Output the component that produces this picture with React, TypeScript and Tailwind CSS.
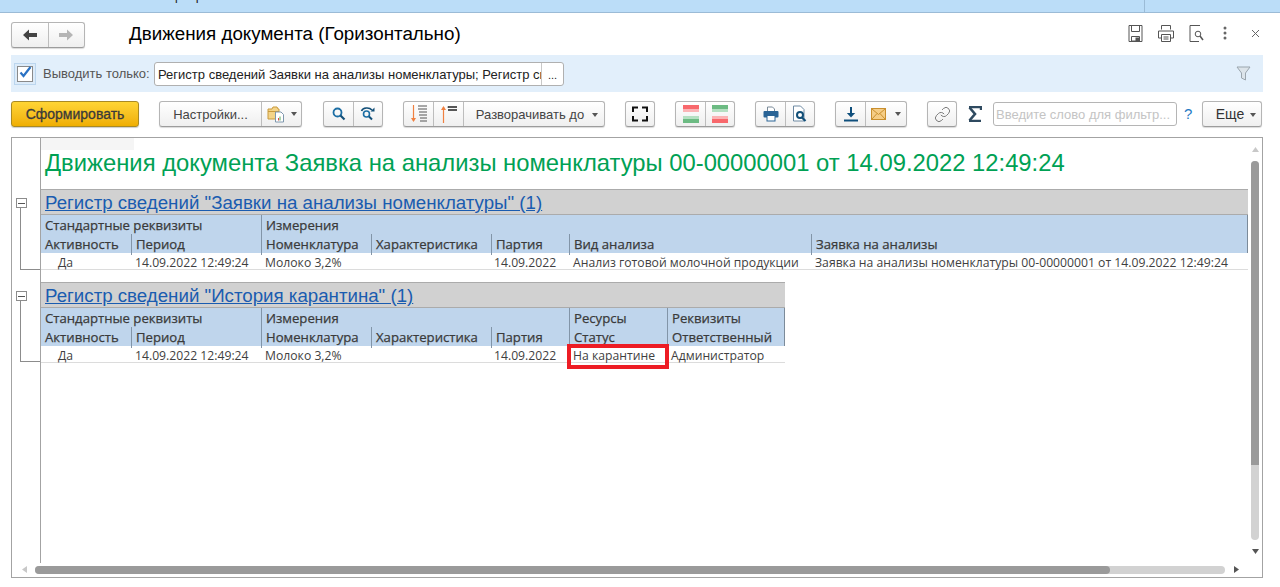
import React from "react";
import { Link as LinkIcon } from "lucide-react";

const ui = "font-['Liberation_Sans',sans-serif]";
const tbl = "font-['Open_Sans',sans-serif]";

function Caret({ className = "" }: { className?: string }) {
  return <span className={"inline-block w-0 h-0 border-l-[3.5px] border-r-[3.5px] border-t-[4px] border-l-transparent border-r-transparent border-t-[#555] " + className} />;
}

function Group({ className = "", children }: { className?: string; children: React.ReactNode }) {
  return (
    <div className={"flex h-[26px] shrink-0 rounded-[3px] border border-[#b5b5b5] border-b-[#9c9c9c] bg-gradient-to-b from-white to-[#efefef] shadow-[0_1px_1px_rgba(0,0,0,0.15)] divide-x divide-[#bdbdbd] " + className}>
      {children}
    </div>
  );
}

function Seg({ className = "", children }: { className?: string; children: React.ReactNode }) {
  return <div className={"flex items-center justify-center h-full " + className}>{children}</div>;
}

const Search = () => (
  <svg width="16" height="16" viewBox="0 0 16 16" fill="none"><circle cx="6.5" cy="6.5" r="4" stroke="#1c6ea4" strokeWidth="1.8" /><path d="M9.5 9.5l4 4" stroke="#124f78" strokeWidth="2.2" /></svg>
);
const SearchRepeat = () => (
  <svg width="18" height="16" viewBox="0 0 18 16" fill="none"><circle cx="7.5" cy="8" r="3" stroke="#1c6ea4" strokeWidth="1.6" /><path d="M10 10.5l3 3" stroke="#124f78" strokeWidth="2" /><path d="M2.5 5C4 1.5 10 0.8 13 4" stroke="#124f78" strokeWidth="1.6" /><path d="M11.5 5.5h4v-4z" fill="#124f78" /></svg>
);
const SortDown = () => (
  <svg width="18" height="20" viewBox="0 0 18 20" fill="none">
    <path d="M3.5 1v16" stroke="#f08040" strokeWidth="1.2" /><path d="M1 14l2.5 4 2.5-4z" fill="#f08040" />
    <path d="M8 2h9M8 5h9M9 8h8M9 11h8M10 14h7M10 17h7" stroke="#555" strokeWidth="1" />
  </svg>
);
const SortUp = () => (
  <svg width="18" height="20" viewBox="0 0 18 20" fill="none">
    <path d="M3.5 3v16" stroke="#f08040" strokeWidth="1.2" /><path d="M1 6l2.5-4 2.5 4z" fill="#f08040" />
    <path d="M8 3h9M8 6h9" stroke="#222" strokeWidth="1.4" /><circle cx="8" cy="3" r="0.6" fill="#222" />
  </svg>
);
const Full = () => (
  <svg width="16" height="16" viewBox="0 0 16 16" fill="none" stroke="#111" strokeWidth="2"><path d="M1 6V1.500h5M10 1.500h5V6M1 10v4.500h5M10 14.500h5V10" /></svg>
);
const Bars = ({ flip }: { flip?: boolean }) => (
  <svg width="16" height="18" viewBox="0 0 16 18">
    {flip ? (
      <>
        <rect width="16" height="4" fill="#6cbb83" /><rect y="4" width="16" height="3" fill="#b5e0c2" />
        <rect y="11" width="16" height="3" fill="#fbb4b6" /><rect y="14" width="16" height="4" fill="#f8686c" />
      </>
    ) : (
      <>
        <rect width="16" height="4" fill="#f8686c" /><rect y="4" width="16" height="3" fill="#fbb4b6" />
        <rect y="11" width="16" height="3" fill="#b5e0c2" /><rect y="14" width="16" height="4" fill="#6cbb83" />
      </>
    )}
  </svg>
);
const Printer = () => (
  <svg width="16" height="16" viewBox="0 0 16 16" fill="none"><path d="M4.500 5V1h5l2 2v2" stroke="#7a8a99" fill="#fff" /><rect x="0.500" y="5" width="15" height="6.500" rx="1" fill="#2a6496" /><rect x="4" y="9.500" width="8" height="5.500" fill="#fff" stroke="#2a6496" /></svg>
);
const Preview = () => (
  <svg width="16" height="18" viewBox="0 0 16 18" fill="none"><path d="M1.500 1h7l3.500 3.500V16h-10.500z" stroke="#6e8aa3" fill="#fff" /><circle cx="8" cy="10" r="3" stroke="#124f78" strokeWidth="2" /><path d="M10 12.500l3.500 3.500" stroke="#124f78" strokeWidth="2.2" /></svg>
);
const Download = () => (
  <svg width="16" height="16" viewBox="0 0 16 16" fill="none"><path d="M8 1v8" stroke="#0f4f7c" strokeWidth="2" /><path d="M3.800 7h8.400L8 11.500z" fill="#0f4f7c" /><path d="M1 14.500h14" stroke="#0f4f7c" strokeWidth="2" /></svg>
);
const Mail = () => (
  <svg width="15" height="12" viewBox="0 0 15 12" fill="none"><rect x="0.500" y="0.500" width="14" height="11" fill="#f5cd86" stroke="#c98f2e" /><path d="M1 1l6.500 5.500L14 1M1 11l5-5.500M14 11L9 5.500" stroke="#c98f2e" /></svg>
);
const Folder = () => (
  <svg width="18" height="18" viewBox="0 0 18 18" fill="none"><path d="M1 4h4l1-2h4l1 2h1v10H1z" fill="#f4d488" stroke="#c99a3c" /><path d="M1 6.500h11" stroke="#c99a3c" /><path d="M8.500 7h5.500l2.500 2.500V17h-8z" fill="#fff" stroke="#7e97ad" /><rect x="11" y="13" width="1" height="2.500" fill="#d44" /><rect x="12.500" y="11.500" width="1" height="4" fill="#5a5" /></svg>
);
const Funnel = () => (
  <svg width="15" height="15" viewBox="0 0 15 15" fill="none"><path d="M1 1h13L9.500 7v7l-4-2V7z" stroke="#9aa5ad" fill="#dce4ea" /></svg>
);
const Floppy = () => (
  <svg width="15" height="17" viewBox="0 0 15 17" fill="none" stroke="#555"><path d="M1 0.500h13v16H1z" /><path d="M3.500 1v5.500h8V1M3.500 11.500h8V16h-8z" /><rect x="8" y="13" width="3" height="3" fill="#555" /></svg>
);
const PrintOut = () => (
  <svg width="16" height="17" viewBox="0 0 16 17" fill="none" stroke="#555"><path d="M3.500 4.500V0.500h9v4M0.500 6h15v7h-3M3.500 13h-3V6" /><path d="M3.500 9.500h9v7h-9zM5.500 12h5M5.500 14h5" /></svg>
);
const PageSearch = () => (
  <svg width="15" height="17" viewBox="0 0 15 17" fill="none" stroke="#555"><path d="M10 16.500H1V0.500h10" /><circle cx="9" cy="9" r="2.800" /><path d="M11 11l3 4" strokeWidth="1.500" /></svg>
);

const headDiv = "border-l border-[#8295a8]";

function Head({ cols, groups, labels, width }: { cols: string; groups: { t: string; span: string }[]; labels: string[]; width: string }) {
  return (
    <div className={"bg-[#bfd5ec] border-r border-[#7c8b9a] text-[13.15px] text-[#3a3a3a] [-webkit-text-stroke:0.25px_#3a3a3a] " + width}>
      <div className={"grid h-[19px] " + cols}>
        {groups.map((g, i) => (
          <div key={g.t} className={"pl-[4px] leading-[20px] whitespace-nowrap " + g.span + (i ? " " + headDiv : "")}>{g.t}</div>
        ))}
      </div>
      <div className={"grid h-[19px] " + cols}>
        {labels.map((l, i) => (
          <div key={i} className={"pl-[4px] leading-[21px] whitespace-nowrap " + (i ? headDiv : "")}>{l}</div>
        ))}
      </div>
    </div>
  );
}

function Row({ cols, cells, width }: { cols: string; cells: React.ReactNode[]; width: string }) {
  return (
    <div className={"grid h-[17px] border-b border-[#dcdcdc] text-[12.2px] leading-[20px] text-[#3f3f3f] " + cols + " " + width}>
      {cells.map((c, i) => (
        <div key={i} className={"whitespace-nowrap " + (i === 0 ? "pl-[17px]" : i === 4 ? "pl-[3px]" : "pl-[4px]")}>{c}</div>
      ))}
    </div>
  );
}

function Section({ title, width, children }: { title: string; width: string; children: React.ReactNode }) {
  return (
    <div className={width}>
      <div className={"h-[26px] bg-[#d1d1d1] border-t border-b border-[#ababab] pl-[4px] text-[18.7px] leading-[26px] text-[#1a5cb0] underline whitespace-nowrap " + ui}>{title}</div>
      {children}
    </div>
  );
}

function Tree({ height }: { height: string }) {
  return (
    <div className={"ml-[3px] " + height}>
      <div className="w-[11px] h-[10px] border border-[#8c8c8c] bg-white flex items-center justify-center">
        <div className="w-[7px] h-px bg-[#555]" />
      </div>
      <div className="ml-[4px] w-[20px] border-l border-b border-[#8c8c8c] h-[calc(100%-10px)]" />
    </div>
  );
}

export default function App() {
  const c1 = "grid-cols-[90px_130px_110px_120px_78px_242px_436px]";
  const c2 = "grid-cols-[90px_130px_110px_120px_78px_98px_117px]";
  return (
    <div className={"w-[1280px] h-[587px] bg-white overflow-hidden text-[#333] " + ui}>
      {/* top strip */}
      <div className="h-[13px] bg-[#bbddf8] border-b border-[#9bbbd6] flex overflow-hidden">
        <div className="w-[1145px] border-r border-[#9bbbd6] overflow-hidden">
          <div className="ml-[171px] -mt-[11px] text-[13px] leading-[14px] tracking-[14px] text-[#222]">фр</div>
        </div>
      </div>

      {/* title row */}
      <div className="h-[42px] flex items-start pl-[11px] pr-[20px] pt-[9px]">
        <Group className="w-[74px] h-[24px]">
          <Seg className="w-[37px]">
            <svg width="14" height="12" viewBox="0 0 14 12"><path d="M6 0.500v3.500h8v4H6v3.500L0 6z" fill="#444" /></svg>
          </Seg>
          <Seg className="w-[36px]">
            <svg width="14" height="12" viewBox="0 0 14 12"><path d="M8 0.500v3.500H0v4h8v3.500L14 6z" fill="#b5b5b5" /></svg>
          </Seg>
        </Group>
        <div className="ml-[44px] -mt-[1px] text-[18.8px] leading-[26px] text-black whitespace-nowrap">Движения документа (Горизонтально)</div>
        <div className="ml-auto flex items-center h-[24px] gap-[15px] -mt-[1px]">
          <Floppy /><PrintOut /><PageSearch />
          <svg width="4" height="14" viewBox="0 0 4 14" className="ml-[4px]"><circle cx="2" cy="2" r="1.500" fill="#666" /><circle cx="2" cy="7" r="1.500" fill="#666" /><circle cx="2" cy="12" r="1.500" fill="#666" /></svg>
          <svg width="9" height="9" viewBox="0 0 9 9" className="ml-[9px]"><path d="M1 1l7 7M8 1L1 8" stroke="#666" strokeWidth="1" /></svg>
        </div>
      </div>

      {/* filter band */}
      <div className="mx-[11px] w-[1252px] h-[37px] bg-[#e2effb] flex items-center pl-[3px] pr-[12px]">
        <div className="w-[22px] h-[22px] border border-[#bcd6ee] bg-[#dcebf9] flex items-center justify-center">
          <div className="w-[16px] h-[16px] border border-[#8a8a8a] bg-white flex items-center justify-center">
            <svg width="15" height="15" viewBox="0 0 14 14" className="-mt-[2px]"><path d="M2.500 7l3 3.500L12.500 1.500" stroke="#2a72c4" strokeWidth="2.200" fill="none" /></svg>
          </div>
        </div>
        <div className="ml-[7px] w-[111px] text-[13px] text-[#555] whitespace-nowrap">Выводить только:</div>
        <div className="w-[410px] h-[24px] border border-[#b0b0b0] rounded-[3px] bg-white flex text-[13px] leading-[23px] text-[#222]">
          <div className="w-[387px] pl-[3px] overflow-hidden whitespace-nowrap border-r border-[#c8c8c8]">Регистр сведений Заявки на анализы номенклатуры; Регистр сведений История карантина</div>
          <div className="flex-1 text-center text-[11px] leading-[24px]">...</div>
        </div>
        <div className="ml-auto"><Funnel /></div>
      </div>

      {/* toolbar */}
      <div className="h-[45px] pl-[11px] pt-[9px] flex items-start text-[13px] text-[#444]">
        <div className="w-[128px] h-[26px] pt-px rounded-[3px] border border-[#a98a24] bg-gradient-to-b from-[#ffd534] to-[#efae00] flex items-center justify-center text-[14px] text-[#3a3a3a] [-webkit-text-stroke:0.3px_#3a3a3a] shadow-[0_1px_1px_rgba(0,0,0,0.2)]">Сформировать</div>
        <Group className="ml-[20px] w-[143px]">
          <Seg className="w-[102px] pt-px">Настройки...</Seg>
          <Seg className="flex-1 gap-[6px]"><Folder /><Caret /></Seg>
        </Group>
        <Group className="ml-[21px] w-[60px]">
          <Seg className="w-[30px]"><Search /></Seg>
          <Seg className="flex-1"><SearchRepeat /></Seg>
        </Group>
        <Group className="ml-[20px] w-[202px]">
          <Seg className="w-[30px]"><SortDown /></Seg>
          <Seg className="w-[30px]"><SortUp /></Seg>
          <Seg className="flex-1 gap-[8px] pt-px pl-[6px] whitespace-nowrap">Разворачивать до <Caret /></Seg>
        </Group>
        <Group className="ml-[20px] w-[30px]">
          <Seg className="w-full"><Full /></Seg>
        </Group>
        <Group className="ml-[20px] w-[60px]">
          <Seg className="w-[30px]"><Bars /></Seg>
          <Seg className="flex-1"><Bars flip /></Seg>
        </Group>
        <Group className="ml-[20px] w-[60px]">
          <Seg className="w-[30px]"><Printer /></Seg>
          <Seg className="flex-1"><Preview /></Seg>
        </Group>
        <Group className="ml-[20px] w-[72px]">
          <Seg className="w-[30px]"><Download /></Seg>
          <Seg className="flex-1 gap-[9px]"><Mail /><Caret /></Seg>
        </Group>
        <Group className="ml-[20px] w-[30px]">
          <Seg className="w-full"><LinkIcon size={17} strokeWidth={1.2} color="#666" /></Seg>
        </Group>
        <div className="ml-[11px] w-[14px] h-[26px] flex items-center justify-center">
          <svg width="14" height="16" viewBox="0 0 14 16"><path d="M1 1h12v3M13 15H1" stroke="#2f4a60" strokeWidth="2.400" fill="none" /><path d="M1.500 1.500L7 8l-5.500 6.500" stroke="#2f4a60" strokeWidth="2.600" fill="none" /></svg>
        </div>
        <div className="ml-[11px] w-[184px] h-[24px] mt-[1px] border border-[#b5b5b5] rounded-[3px] bg-white pl-[2px] text-[13px] leading-[23px] text-[#c4c4c4] whitespace-nowrap overflow-hidden">Введите слово для фильтр...</div>
        <div className="ml-[7px] w-[18px] h-[26px] text-[15px] leading-[26px] text-[#1f7ac4]">?</div>
        <Group className="w-[60px]">
          <Seg className="w-full gap-[6px] pt-px pl-[8px] text-[#333] text-[14px]">Еще <Caret /></Seg>
        </Group>
      </div>

      {/* report frame */}
      <div className="ml-[11px] w-[1252px] h-[441px] border border-[#a3a3a3] flex flex-col">
        <div className="flex h-[425px]">
          {/* gutter */}
          <div className="w-[29px] shrink-0 border-r border-[#a3a3a3] pl-px">
            <div className="pt-[60px]"><Tree height="h-[72px]" /></div>
            <div className="pt-[21px]"><Tree height="h-[71px]" /></div>
          </div>
          {/* report */}
          <div className={"w-[1207px] shrink-0 " + tbl}>
            <div className="h-[12px] w-[93px] bg-[#f5f5f5]" />
            <div className={"h-[39px] pl-[4px] text-[23.8px] leading-[26px] text-[#00a154] whitespace-nowrap " + ui}>Движения документа Заявка на анализы номенклатуры 00-00000001 от 14.09.2022 12:49:24</div>
            <Section title={'Регистр сведений "Заявки на анализы номенклатуры" (1)'} width="w-[1207px]">
              <Head
                cols={c1}
                width="w-[1207px]"
                groups={[
                  { t: "Стандартные реквизиты", span: "col-span-2" },
                  { t: "Измерения", span: "col-span-5" },
                ]}
                labels={["Активность", "Период", "Номенклатура", "Характеристика", "Партия", "Вид анализа", "Заявка на анализы"]}
              />
              <Row
                cols={c1}
                width="w-[1207px]"
                cells={["Да", "14.09.2022 12:49:24", "Молоко 3,2%", "", "14.09.2022", "Анализ готовой молочной продукции", "Заявка на анализы номенклатуры 00-00000001 от 14.09.2022 12:49:24"]}
              />
            </Section>
            <div className="h-[12px]" />
            <Section title={'Регистр сведений "История карантина" (1)'} width="w-[744px]">
              <Head
                cols={c2}
                width="w-[744px]"
                groups={[
                  { t: "Стандартные реквизиты", span: "col-span-2" },
                  { t: "Измерения", span: "col-span-3" },
                  { t: "Ресурсы", span: "" },
                  { t: "Реквизиты", span: "" },
                ]}
                labels={["Активность", "Период", "Номенклатура", "Характеристика", "Партия", "Статус", "Ответственный"]}
              />
              <div className="relative">
                <Row
                  cols={c2}
                  width="w-[744px]"
                  cells={["Да", "14.09.2022 12:49:24", "Молоко 3,2%", "", "14.09.2022", "На карантине", "Администратор"]}
                />
                <div className="absolute left-[526px] -top-[2px] w-[102px] h-[25px] border-[4px] border-[#ed1c24]" />
              </div>
            </Section>
          </div>
          {/* vertical scrollbar */}
          <div className="flex-1 flex flex-col items-center pl-[3px] pr-[3px] pt-[9px]">
            <svg width="7" height="5" viewBox="0 0 7 5"><path d="M0 5l3.500-5L7 5z" fill="#c8c8c8" /></svg>
            <div className="mt-[9px] w-[8px] h-[379px] rounded-[4px] bg-[#d2d2d2] overflow-hidden">
              <div className="h-[304px] bg-[#9a9a9a]" />
            </div>
            <svg width="7" height="5" viewBox="0 0 7 5" className="mt-[9px]"><path d="M0 0l3.500 5L7 0z" fill="#555" /></svg>
          </div>
        </div>
        {/* horizontal scrollbar */}
        <div className="flex-1 flex items-center pl-[10px] pb-[1px]">
          <svg width="5" height="7" viewBox="0 0 5 7"><path d="M5 0L0 3.500 5 7z" fill="#c8c8c8" /></svg>
          <div className="ml-[8px] w-[1190px] h-[8px] rounded-[4px] bg-[#d2d2d2] overflow-hidden">
            <div className="w-[1075px] h-full bg-[#9a9a9a] rounded-r-[4px]" />
          </div>
          <svg width="5" height="7" viewBox="0 0 5 7" className="ml-[9px]"><path d="M0 0l5 3.500L0 7z" fill="#555" /></svg>
        </div>
      </div>
    </div>
  );
}
